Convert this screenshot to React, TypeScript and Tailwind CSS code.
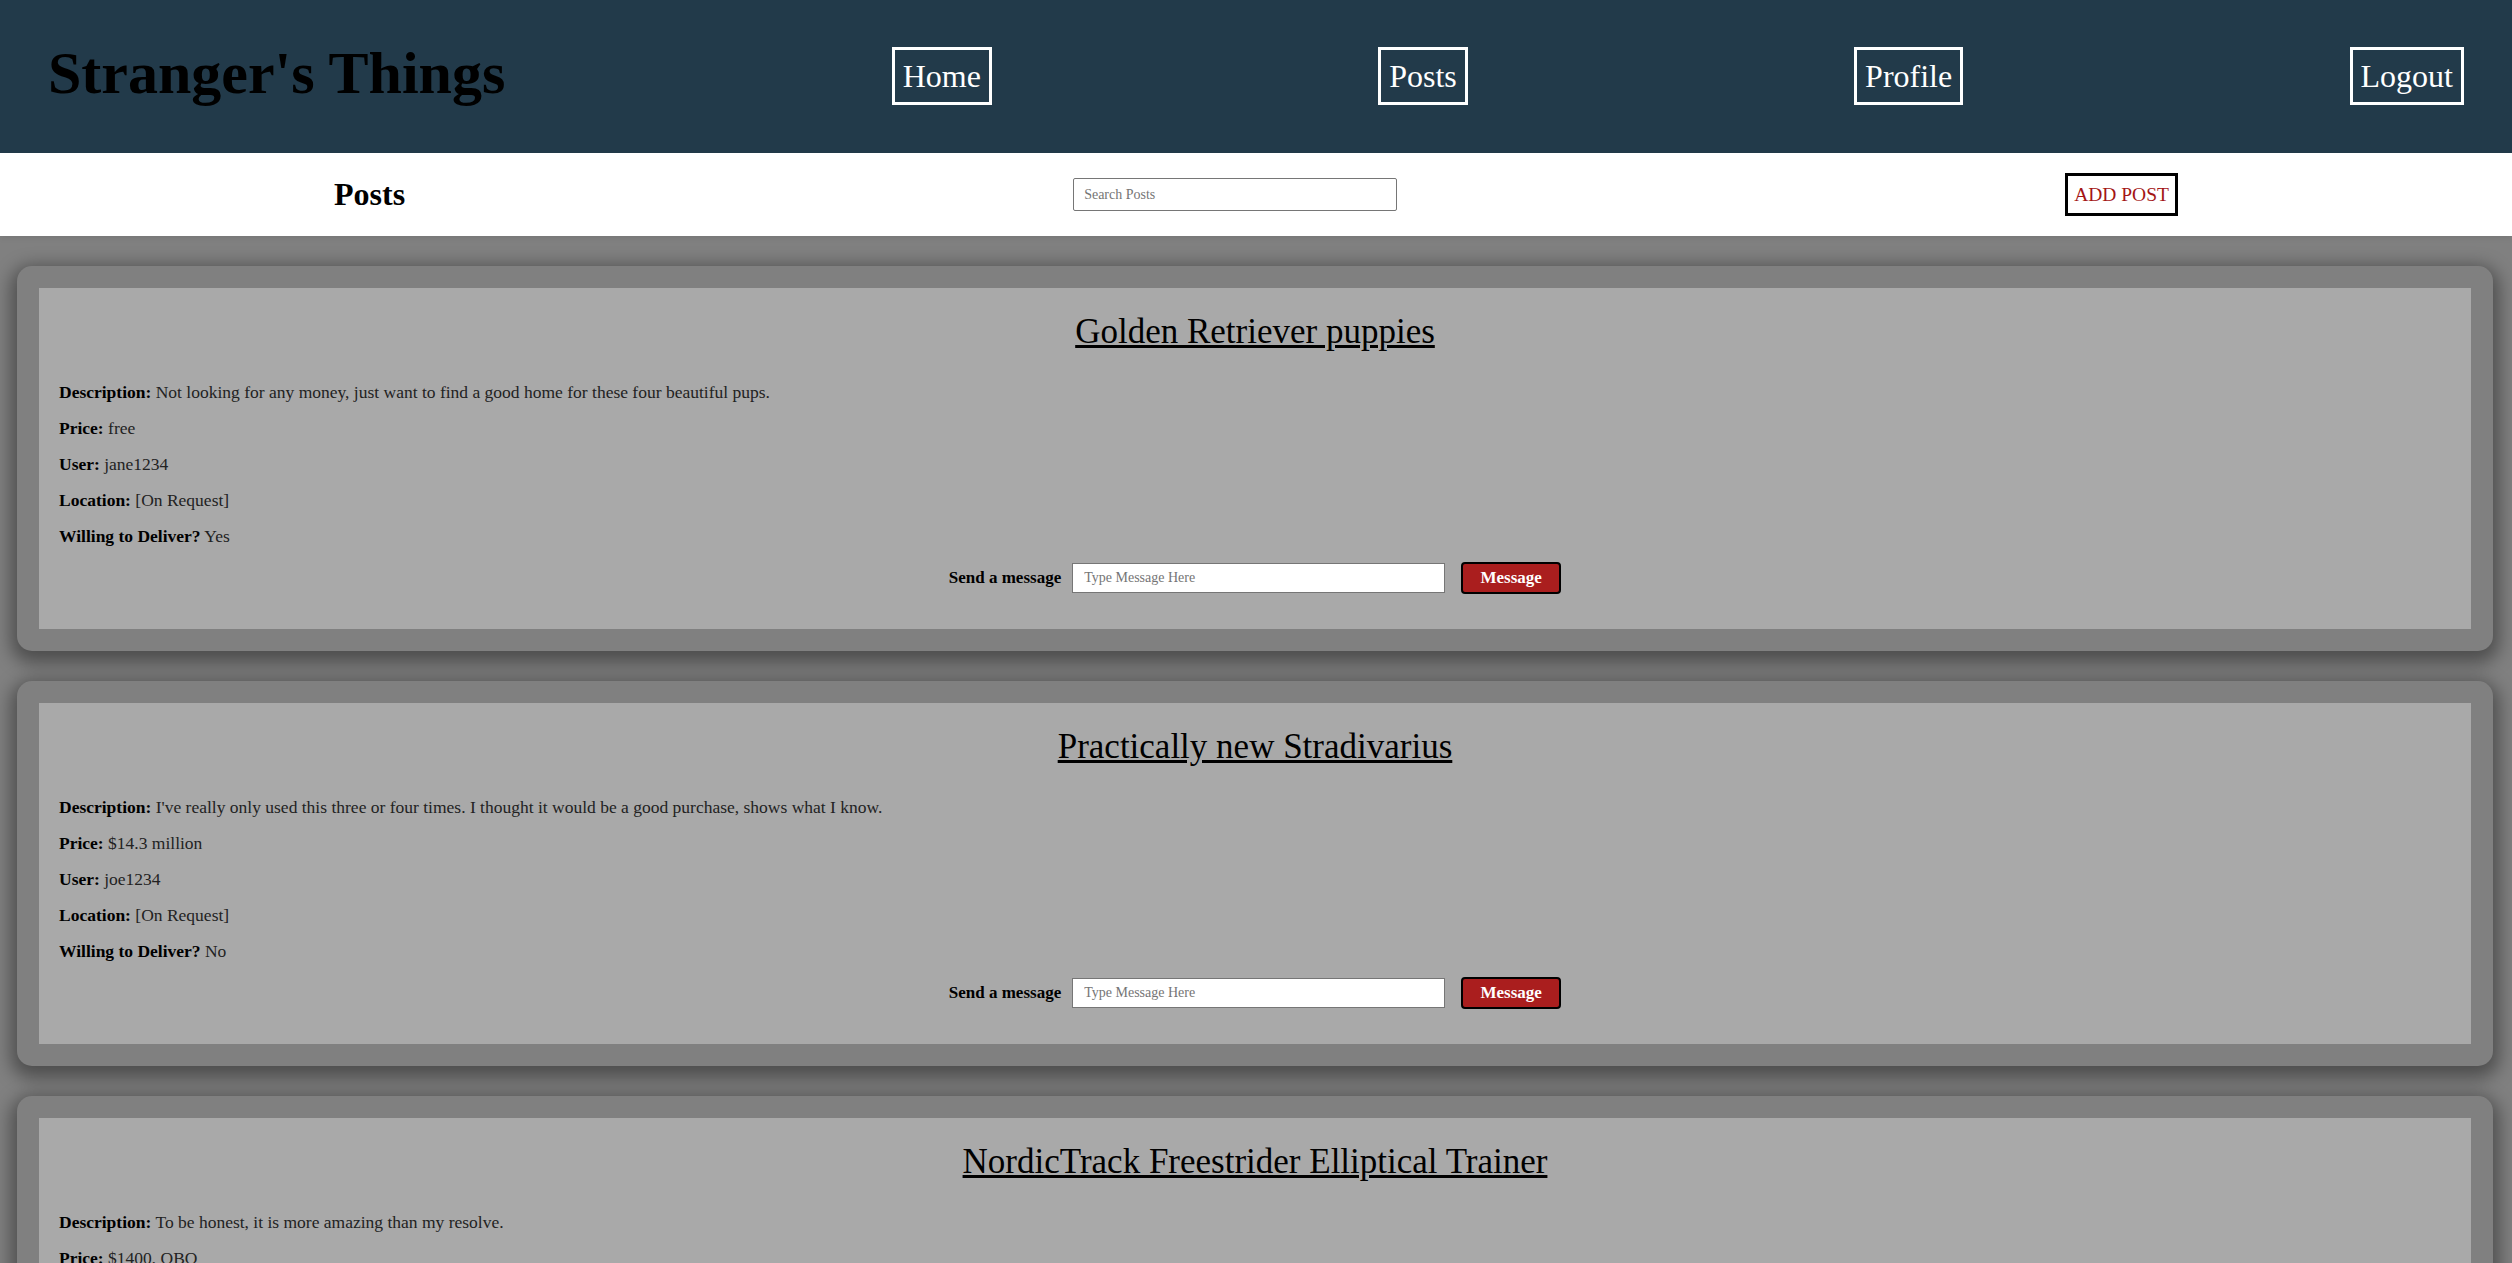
import React from 'react';

type Post = {
  title: string;
  description: string;
  price: string;
  user: string;
  location: string;
  willDeliver: boolean;
};

const posts: Post[] = [
  {
    title: 'Golden Retriever puppies',
    description: 'Not looking for any money, just want to find a good home for these four beautiful pups.',
    price: 'free',
    user: 'jane1234',
    location: '[On Request]',
    willDeliver: true,
  },
  {
    title: 'Practically new Stradivarius',
    description: "I've really only used this three or four times. I thought it would be a good purchase, shows what I know.",
    price: '$14.3 million',
    user: 'joe1234',
    location: '[On Request]',
    willDeliver: false,
  },
  {
    title: 'NordicTrack Freestrider Elliptical Trainer',
    description: 'To be honest, it is more amazing than my resolve.',
    price: '$1400, OBO',
    user: 'jane1234',
    location: '[On Request]',
    willDeliver: true,
  },
];

const NavLink: React.FC<{ label: string }> = ({ label }) => (
  <a className="mb-[2px] border-[3px] border-white px-[8px] py-[7px] text-[32px] leading-[38px] text-white cursor-pointer">
    {label}
  </a>
);

const Field: React.FC<{ label: string; value: string }> = ({ label, value }) => (
  <p className="text-[17.5px] leading-[20px] text-[#222]">
    <b className="text-black">{label}</b> {value}
  </p>
);

const PostCard: React.FC<{ post: Post }> = ({ post }) => (
  <div className="rounded-[15px] bg-[#808080] p-[22px] shadow-[0_6px_18px_6px_rgba(0,0,0,0.4)]">
    <div className="bg-[#a9a9a9] pt-[24px] pb-[35px] px-[20px]">
      <h2 className="text-center text-[35px] leading-[40px] text-black underline">{post.title}</h2>
      <div className="mt-[30px] flex flex-col gap-[16px]">
        <Field label="Description:" value={post.description} />
        <Field label="Price:" value={post.price} />
        <Field label="User:" value={post.user} />
        <Field label="Location:" value={post.location} />
        <Field label="Willing to Deliver?" value={post.willDeliver ? 'Yes' : 'No'} />
      </div>
      <div className="mt-[16px] flex items-center justify-center">
        <span className="text-[17px] font-bold text-black">Send a message</span>
        <input
          placeholder="Type Message Here"
          className="ml-[11px] h-[30px] w-[373px] border border-[#767676] bg-white px-[11px] text-[14px] font-['Liberation_Serif',serif] placeholder:text-[#757575]"
        />
        <button className="ml-[16px] h-[32px] w-[100px] rounded-[4px] border-2 border-black bg-[#aa1e1e] text-[17px] font-bold text-white font-['Liberation_Serif',serif]">
          Message
        </button>
      </div>
    </div>
  </div>
);

const App: React.FC = () => {
  return (
    <div className="min-h-screen bg-[#808080] font-['Liberation_Serif',serif]">
      {/* Header */}
      <header className="flex h-[153px] items-center justify-between bg-[#223a4a] px-[48px]">
        <h1 className="mb-[7px] text-[60px] font-bold text-black">Stranger's Things</h1>
        <NavLink label="Home" />
        <NavLink label="Posts" />
        <NavLink label="Profile" />
        <NavLink label="Logout" />
      </header>

      {/* Posts toolbar */}
      <div className="flex h-[83px] items-center justify-around bg-white shadow-[0_2px_6px_rgba(0,0,0,0.08)]">
        <h2 className="mb-[2px] text-[32px] font-bold text-black">Posts</h2>
        <input
          placeholder="Search Posts"
          className="h-[33px] w-[324px] rounded-[2px] border border-[#767676] px-[10px] text-[14px] font-['Liberation_Serif',serif] placeholder:text-[#757575]"
        />
        <button className="flex h-[43px] items-center border-[3px] border-black bg-white px-[6px] text-[19.5px] text-[#a31515] font-['Liberation_Serif',serif]">
          ADD POST
        </button>
      </div>

      {/* Post list */}
      <main className="flex flex-col gap-[30px] pt-[30px] pb-[30px] pl-[17px] pr-[19px]">
        {posts.map((post) => (
          <PostCard key={post.title} post={post} />
        ))}
      </main>
    </div>
  );
};

export default App;
